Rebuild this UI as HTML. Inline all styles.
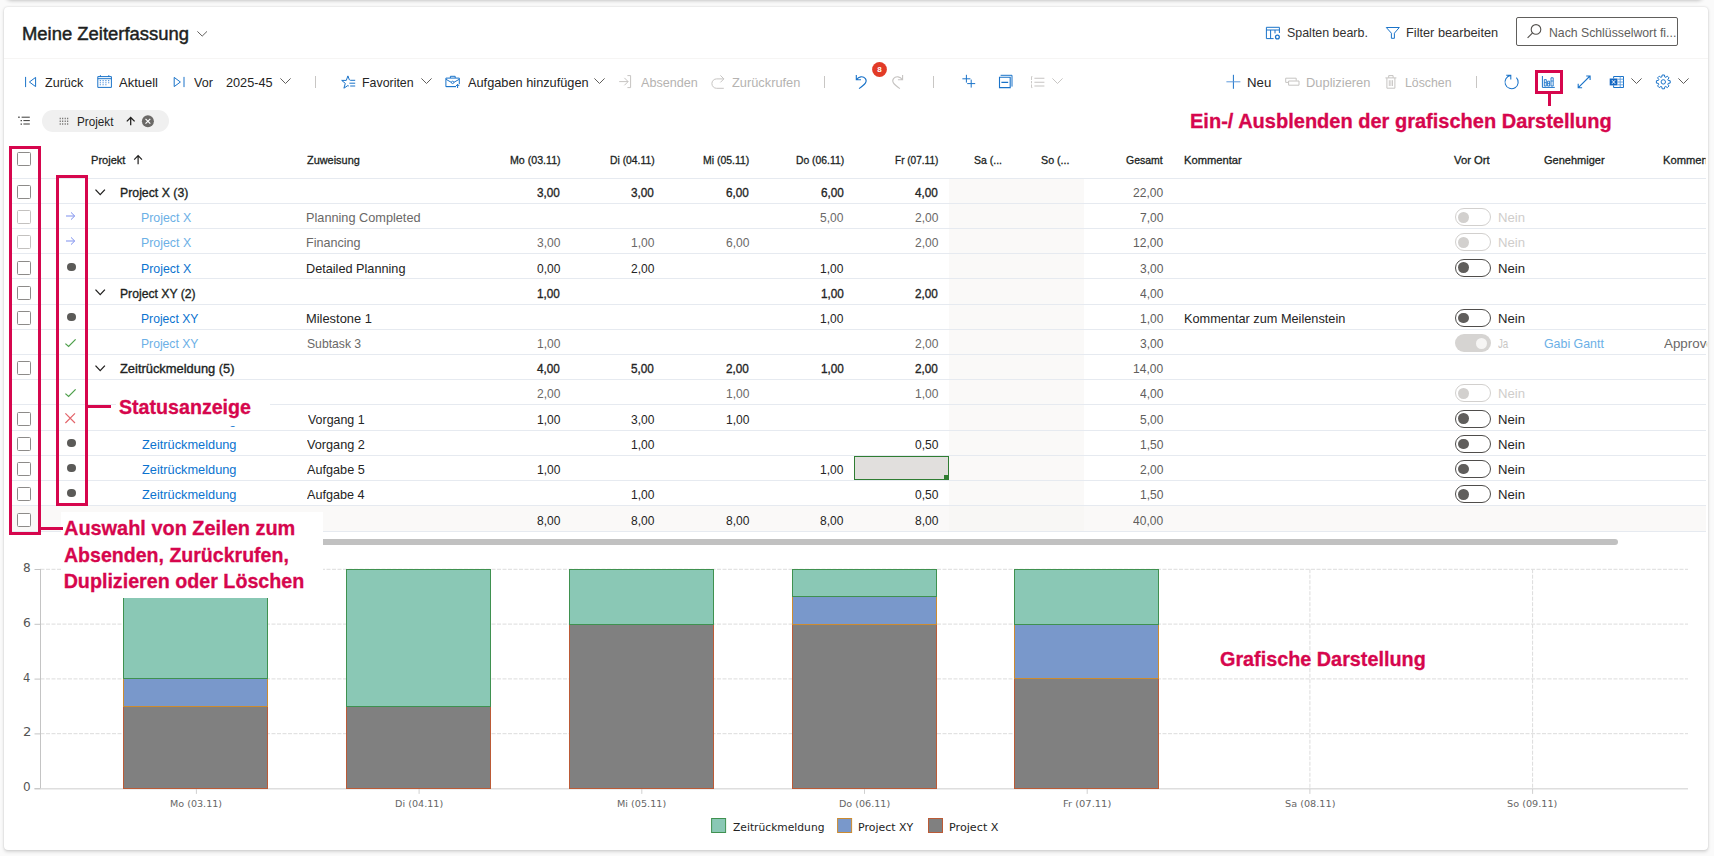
<!DOCTYPE html>
<html lang="de"><head><meta charset="utf-8"><title>Meine Zeiterfassung</title>
<style>
html,body{margin:0;padding:0}
body{width:1714px;height:856px;overflow:hidden;background:#fafafa;font-family:"Liberation Sans",sans-serif}
#app{position:relative;width:1714px;height:856px;overflow:hidden;background:#fafafa}
#app div,#app svg,#app span{position:absolute;display:block}
#app span{white-space:nowrap;line-height:20px;height:20px;transform-origin:0 0}
svg{overflow:visible}

</style></head>
<body>
<div id="app">
<div style="left:7px;top:-12px;width:1695px;height:12px;background:#fff;border-radius:4px;box-shadow:0 0 4px rgba(0,0,0,.32)"></div><div style="left:4px;top:7px;width:1704px;height:843px;background:#fff;border-radius:4px;box-shadow:0 0 2px rgba(0,0,0,.12),0 1.5px 3.5px rgba(0,0,0,.14)"></div><div style="left:949px;top:178.2px;width:135px;height:353.58px;background:#faf9f8"></div><div style="left:9px;top:505.41px;width:1697px;height:26.37px;background:#faf9f8"></div><div style="left:949px;top:505.41px;width:135px;height:26.37px;background:#f8f7f5"></div><div style="left:4px;top:58px;width:1704px;height:1px;background:#f6f5f4"></div><div style="left:1516px;top:17px;width:162px;height:28.5px;box-sizing:border-box;border:1px solid #605e5c;border-radius:2px;background:#fff"></div><div style="left:314.5px;top:76.3px;width:1px;height:11.5px;background:#c8c6c4"></div><div style="left:824px;top:76.3px;width:1px;height:11.5px;background:#c8c6c4"></div><div style="left:932.5px;top:76.3px;width:1px;height:11.5px;background:#c8c6c4"></div><div style="left:1475.5px;top:76.3px;width:1px;height:11.5px;background:#c8c6c4"></div><div style="left:42px;top:110px;width:127px;height:22px;background:#f0f0f0;border-radius:11px"></div><div style="left:9px;top:178px;width:1697px;height:1px;background:#e6eaf0"></div><div style="left:9px;top:203px;width:1697px;height:1px;background:#e6eaf0"></div><div style="left:9px;top:228px;width:1697px;height:1px;background:#e6eaf0"></div><div style="left:9px;top:253px;width:1697px;height:1px;background:#e6eaf0"></div><div style="left:9px;top:278px;width:1697px;height:1px;background:#e6eaf0"></div><div style="left:9px;top:304px;width:1697px;height:1px;background:#e6eaf0"></div><div style="left:9px;top:329px;width:1697px;height:1px;background:#e6eaf0"></div><div style="left:9px;top:354px;width:1697px;height:1px;background:#e6eaf0"></div><div style="left:9px;top:379px;width:1697px;height:1px;background:#e6eaf0"></div><div style="left:9px;top:404px;width:1697px;height:1px;background:#e6eaf0"></div><div style="left:9px;top:430px;width:1697px;height:1px;background:#e6eaf0"></div><div style="left:9px;top:455px;width:1697px;height:1px;background:#e6eaf0"></div><div style="left:9px;top:480px;width:1697px;height:1px;background:#e6eaf0"></div><div style="left:9px;top:505px;width:1697px;height:1px;background:#e6eaf0"></div><div style="left:9px;top:531px;width:1697px;height:1px;background:#e6eaf0"></div><div style="left:300px;top:539px;width:1318px;height:6.2px;background:#c1c1c1;border-radius:3px"></div><svg style="left:0;top:0" width="1714" height="856" viewBox="0 0 1714 856"><path d="M40.5 733.7 H1688" stroke="#dcdcdc" stroke-width="1" stroke-dasharray="4 1.5" fill="none"/><path d="M40.5 678.9 H1688" stroke="#dcdcdc" stroke-width="1" stroke-dasharray="4 1.5" fill="none"/><path d="M40.5 624.1 H1688" stroke="#dcdcdc" stroke-width="1" stroke-dasharray="4 1.5" fill="none"/><path d="M40.5 569.3 H1688" stroke="#dcdcdc" stroke-width="1" stroke-dasharray="4 1.5" fill="none"/><path d="M196.4 569.2 V788.4" stroke="#dcdcdc" stroke-width="1" stroke-dasharray="4 1.5" fill="none"/><path d="M419.1 569.2 V788.4" stroke="#dcdcdc" stroke-width="1" stroke-dasharray="4 1.5" fill="none"/><path d="M641.8 569.2 V788.4" stroke="#dcdcdc" stroke-width="1" stroke-dasharray="4 1.5" fill="none"/><path d="M864.5 569.2 V788.4" stroke="#dcdcdc" stroke-width="1" stroke-dasharray="4 1.5" fill="none"/><path d="M1087.2 569.2 V788.4" stroke="#dcdcdc" stroke-width="1" stroke-dasharray="4 1.5" fill="none"/><path d="M1309.9 569.2 V788.4" stroke="#dcdcdc" stroke-width="1" stroke-dasharray="4 1.5" fill="none"/><path d="M1532.6 569.2 V788.4" stroke="#dcdcdc" stroke-width="1" stroke-dasharray="4 1.5" fill="none"/><path d="M40.5 568.9 V788.9" stroke="#c4c4c4" stroke-width="1" fill="none"/><path d="M34.5 788.6999999999999 H1688" stroke="#dedede" stroke-width="1.6" fill="none"/><path d="M34.5 788.7 H40.5" stroke="#c4c4c4" stroke-width="1" fill="none"/><path d="M34.5 733.9 H40.5" stroke="#c4c4c4" stroke-width="1" fill="none"/><path d="M34.5 679.1 H40.5" stroke="#c4c4c4" stroke-width="1" fill="none"/><path d="M34.5 624.3 H40.5" stroke="#c4c4c4" stroke-width="1" fill="none"/><path d="M34.5 569.5 H40.5" stroke="#c4c4c4" stroke-width="1" fill="none"/><path d="M196.4 788.9 V793.9" stroke="#d0d0d0" stroke-width="1" fill="none"/><path d="M419.1 788.9 V793.9" stroke="#d0d0d0" stroke-width="1" fill="none"/><path d="M641.8 788.9 V793.9" stroke="#d0d0d0" stroke-width="1" fill="none"/><path d="M864.5 788.9 V793.9" stroke="#d0d0d0" stroke-width="1" fill="none"/><path d="M1087.2 788.9 V793.9" stroke="#d0d0d0" stroke-width="1" fill="none"/><path d="M1309.9 788.9 V793.9" stroke="#d0d0d0" stroke-width="1" fill="none"/><path d="M1532.6 788.9 V793.9" stroke="#d0d0d0" stroke-width="1" fill="none"/><rect x="123.5" y="706.5" width="144" height="82.0" fill="#808080" stroke="#bb5a36" stroke-width="1"/><rect x="123.5" y="678.5" width="144" height="28.0" fill="#7998cb" stroke="#cc8b30" stroke-width="1"/><rect x="123.5" y="569.5" width="144" height="109.0" fill="#8ac8b5" stroke="#3f9150" stroke-width="1"/><rect x="346.5" y="706.5" width="144" height="82.0" fill="#808080" stroke="#bb5a36" stroke-width="1"/><rect x="346.5" y="569.5" width="144" height="137.0" fill="#8ac8b5" stroke="#3f9150" stroke-width="1"/><rect x="569.5" y="624.5" width="144" height="164.0" fill="#808080" stroke="#bb5a36" stroke-width="1"/><rect x="569.5" y="569.5" width="144" height="55.0" fill="#8ac8b5" stroke="#3f9150" stroke-width="1"/><rect x="792.5" y="624.5" width="144" height="164.0" fill="#808080" stroke="#bb5a36" stroke-width="1"/><rect x="792.5" y="596.5" width="144" height="28.0" fill="#7998cb" stroke="#cc8b30" stroke-width="1"/><rect x="792.5" y="569.5" width="144" height="27.0" fill="#8ac8b5" stroke="#3f9150" stroke-width="1"/><rect x="1014.5" y="678.5" width="144" height="110.0" fill="#808080" stroke="#bb5a36" stroke-width="1"/><rect x="1014.5" y="624.5" width="144" height="54.0" fill="#7998cb" stroke="#cc8b30" stroke-width="1"/><rect x="1014.5" y="569.5" width="144" height="55.0" fill="#8ac8b5" stroke="#3f9150" stroke-width="1"/><rect x="711.6" y="818.5" width="14" height="14" fill="#8ac8b5" stroke="#3f9150" stroke-width="1"/><rect x="837.6" y="818.5" width="14" height="14" fill="#7998cb" stroke="#cc8b30" stroke-width="1"/><rect x="928.5" y="818.5" width="14" height="14" fill="#808080" stroke="#bb5a36" stroke-width="1"/></svg><div style="left:17px;top:152px;width:14px;height:14px;box-sizing:border-box;border:1px solid #8d8b89;border-radius:1.5px;background:#fff"></div><div style="left:17px;top:185px;width:14px;height:14px;box-sizing:border-box;border:1px solid #8d8b89;border-radius:1.5px;background:#fff"></div><div style="left:17px;top:210px;width:14px;height:14px;box-sizing:border-box;border:1px solid #c3c1bf;border-radius:1.5px;background:#fff"></div><div style="left:1455px;top:208.27px;width:36px;height:18px;box-sizing:border-box;border:1px solid #d2d0ce;border-radius:9px;background:#fff"></div><div style="left:17px;top:235px;width:14px;height:14px;box-sizing:border-box;border:1px solid #c3c1bf;border-radius:1.5px;background:#fff"></div><div style="left:1455px;top:233.44px;width:36px;height:18px;box-sizing:border-box;border:1px solid #d2d0ce;border-radius:9px;background:#fff"></div><div style="left:17px;top:261px;width:14px;height:14px;box-sizing:border-box;border:1px solid #8d8b89;border-radius:1.5px;background:#fff"></div><div style="left:67.45px;top:262.86px;width:8.1px;height:8.1px;border-radius:50%;background:#5b5a58"></div><div style="left:1455px;top:258.61px;width:36px;height:18px;box-sizing:border-box;border:1px solid #4f4d4b;border-radius:9px;background:#fff"></div><div style="left:17px;top:286px;width:14px;height:14px;box-sizing:border-box;border:1px solid #8d8b89;border-radius:1.5px;background:#fff"></div><div style="left:17px;top:311px;width:14px;height:14px;box-sizing:border-box;border:1px solid #8d8b89;border-radius:1.5px;background:#fff"></div><div style="left:67.45px;top:313.2px;width:8.1px;height:8.1px;border-radius:50%;background:#5b5a58"></div><div style="left:1455px;top:308.95px;width:36px;height:18px;box-sizing:border-box;border:1px solid #4f4d4b;border-radius:9px;background:#fff"></div><div style="left:1455px;top:334.12px;width:36px;height:18px;border-radius:9px;background:#d6d4d2"></div><div style="left:17px;top:361px;width:14px;height:14px;box-sizing:border-box;border:1px solid #8d8b89;border-radius:1.5px;background:#fff"></div><div style="left:1455px;top:384.46px;width:36px;height:18px;box-sizing:border-box;border:1px solid #d2d0ce;border-radius:9px;background:#fff"></div><div style="left:17px;top:412px;width:14px;height:14px;box-sizing:border-box;border:1px solid #8d8b89;border-radius:1.5px;background:#fff"></div><div style="left:1455px;top:409.63px;width:36px;height:18px;box-sizing:border-box;border:1px solid #4f4d4b;border-radius:9px;background:#fff"></div><div style="left:17px;top:437px;width:14px;height:14px;box-sizing:border-box;border:1px solid #8d8b89;border-radius:1.5px;background:#fff"></div><div style="left:67.45px;top:439.05px;width:8.1px;height:8.1px;border-radius:50%;background:#5b5a58"></div><div style="left:1455px;top:434.8px;width:36px;height:18px;box-sizing:border-box;border:1px solid #4f4d4b;border-radius:9px;background:#fff"></div><div style="left:17px;top:462px;width:14px;height:14px;box-sizing:border-box;border:1px solid #8d8b89;border-radius:1.5px;background:#fff"></div><div style="left:67.45px;top:464.22px;width:8.1px;height:8.1px;border-radius:50%;background:#5b5a58"></div><div style="left:1455px;top:459.97px;width:36px;height:18px;box-sizing:border-box;border:1px solid #4f4d4b;border-radius:9px;background:#fff"></div><div style="left:17px;top:487px;width:14px;height:14px;box-sizing:border-box;border:1px solid #8d8b89;border-radius:1.5px;background:#fff"></div><div style="left:67.45px;top:489.39px;width:8.1px;height:8.1px;border-radius:50%;background:#5b5a58"></div><div style="left:1455px;top:485.14px;width:36px;height:18px;box-sizing:border-box;border:1px solid #4f4d4b;border-radius:9px;background:#fff"></div><div style="left:17px;top:513px;width:14px;height:14px;box-sizing:border-box;border:1px solid #8d8b89;border-radius:1.5px;background:#fff"></div><div style="left:1458.3px;top:211.97px;width:10.8px;height:10.8px;border-radius:50%;background:#d2d0ce"></div><div style="left:1458.3px;top:237.14px;width:10.8px;height:10.8px;border-radius:50%;background:#d2d0ce"></div><div style="left:1458.3px;top:262.31px;width:10.8px;height:10.8px;border-radius:50%;background:#605e5c"></div><div style="left:1458.3px;top:312.65px;width:10.8px;height:10.8px;border-radius:50%;background:#605e5c"></div><div style="left:1475.8px;top:337.62px;width:11px;height:11px;border-radius:50%;background:#f6f5f4"></div><div style="left:1458.3px;top:388.16px;width:10.8px;height:10.8px;border-radius:50%;background:#d2d0ce"></div><div style="left:1458.3px;top:413.33px;width:10.8px;height:10.8px;border-radius:50%;background:#605e5c"></div><div style="left:1458.3px;top:438.5px;width:10.8px;height:10.8px;border-radius:50%;background:#605e5c"></div><div style="left:1458.3px;top:463.67px;width:10.8px;height:10.8px;border-radius:50%;background:#605e5c"></div><div style="left:1458.3px;top:488.84px;width:10.8px;height:10.8px;border-radius:50%;background:#605e5c"></div><div style="left:854px;top:456px;width:95.2px;height:24.2px;box-sizing:border-box;border:1px solid #2f7d32;background:#e1dfdd"></div><div style="left:943.6px;top:474.8px;width:5.5px;height:5.3px;background:#2f7d32"></div><svg style="left:196.8px;top:31.4px" width="10.4" height="5.6" viewBox="0 0 10.4 5.6" ><path d="M.4 .4 L5.2 5.1 L10 .4" fill="none" stroke="#605e5c" stroke-width="1.0"/></svg><svg style="left:279.5px;top:78.4px" width="11" height="6" viewBox="0 0 11 6" ><path d="M.4 .4 L5.5 5.5 L10.6 .4" fill="none" stroke="#605e5c" stroke-width="1.0"/></svg><svg style="left:420.6px;top:78.4px" width="11" height="6" viewBox="0 0 11 6" ><path d="M.4 .4 L5.5 5.5 L10.6 .4" fill="none" stroke="#605e5c" stroke-width="1.0"/></svg><svg style="left:594.4px;top:78.4px" width="11" height="6" viewBox="0 0 11 6" ><path d="M.4 .4 L5.5 5.5 L10.6 .4" fill="none" stroke="#605e5c" stroke-width="1.0"/></svg><svg style="left:1051.8px;top:78.4px" width="11" height="6" viewBox="0 0 11 6" ><path d="M.4 .4 L5.5 5.5 L10.6 .4" fill="none" stroke="#c8c6c4" stroke-width="1.0"/></svg><svg style="left:1631px;top:78.4px" width="11" height="6" viewBox="0 0 11 6" ><path d="M.4 .4 L5.5 5.5 L10.6 .4" fill="none" stroke="#605e5c" stroke-width="1.0"/></svg><svg style="left:1677.8px;top:78.4px" width="11" height="6" viewBox="0 0 11 6" ><path d="M.4 .4 L5.5 5.5 L10.6 .4" fill="none" stroke="#605e5c" stroke-width="1.0"/></svg><svg style="left:0;top:0" width="1714" height="856" viewBox="0 0 1714 856"><path d="M25.6 76.9 V87.1" fill="none" stroke="#1a73c9" stroke-width="1.0" /><path d="M35.6 77.4 L29.4 82 L35.6 86.6 Z" fill="none" stroke="#1a73c9" stroke-width="1.0" stroke-linejoin="miter"/><path d="M97.8 76.6 H111.4 V87.4 H97.8 Z M97.8 78.7 H111.4" fill="none" stroke="#1a73c9" stroke-width="1.0" /><path d="M100.4 75.2 V77 M108.8 75.2 V77" fill="none" stroke="#1a73c9" stroke-width="1.0" /><path d="M99.75 80.05 h1.1 v1.1 h-1.1 z" fill="#3b86d8"/><path d="M102.55 80.05 h1.1 v1.1 h-1.1 z" fill="#3b86d8"/><path d="M105.35000000000001 80.05 h1.1 v1.1 h-1.1 z" fill="#3b86d8"/><path d="M108.15 80.05 h1.1 v1.1 h-1.1 z" fill="#3b86d8"/><path d="M99.75 82.15 h1.1 v1.1 h-1.1 z" fill="#3b86d8"/><path d="M102.55 82.15 h1.1 v1.1 h-1.1 z" fill="#3b86d8"/><path d="M105.35000000000001 82.15 h1.1 v1.1 h-1.1 z" fill="#3b86d8"/><path d="M108.15 82.15 h1.1 v1.1 h-1.1 z" fill="#3b86d8"/><path d="M99.75 84.25 h1.1 v1.1 h-1.1 z" fill="#3b86d8"/><path d="M102.55 84.25 h1.1 v1.1 h-1.1 z" fill="#3b86d8"/><path d="M105.35000000000001 84.25 h1.1 v1.1 h-1.1 z" fill="#3b86d8"/><path d="M174.2 77.4 L180.4 82 L174.2 86.6 Z" fill="none" stroke="#1a73c9" stroke-width="1.0" /><path d="M184 76.9 V87.1" fill="none" stroke="#1a73c9" stroke-width="1.0" /><path d="M349.5 80.2 L347.9 75.9 L346.3 80.4 H341.7 L345.3 83.4 L343.9 88.2 L347.9 85.5 L348.8 86.1" fill="none" stroke="#1a73c9" stroke-width="1.0" stroke-linejoin="miter"/><path d="M350.2 80.3 H355.2 M349.4 83.2 H355.2 M350.2 86 H355.2" fill="none" stroke="#1a73c9" stroke-width="1.0" /><path d="M445.9 78.1 H459.3 V84.2 M456 86.6 H445.9 Z M445.9 78.1 V86.6" fill="none" stroke="#1a73c9" stroke-width="1.0" /><path d="M450.4 78 V76.3 H455.2 V78" fill="none" stroke="#1a73c9" stroke-width="1.0" /><path d="M446 79.3 L451.4 82.4 M453.8 82.4 L459.2 79.3" fill="none" stroke="#1a73c9" stroke-width="1.0" /><path d="M451.4 82.4 a1.2 1.2 0 1 0 2.4 0 a1.2 1.2 0 1 0 -2.4 0" fill="none" stroke="#1a73c9" stroke-width="0.9" /><path d="M457.6 88 V84.4 M456 86 L457.6 84.3 L459.2 86" fill="none" stroke="#1a73c9" stroke-width="1.0" /><path d="M619.2 81.6 H628 M624.4 77.9 L628.1 81.6 L624.4 85.3" fill="none" stroke="#c6c4c2" stroke-width="1.0" /><path d="M627.4 75.6 H630.6 V87.6 H627.4" fill="none" stroke="#c6c4c2" stroke-width="1.0" /><path d="M723.8 88.3 H716.6 A4.7 4.7 0 0 1 716.6 78.9 H723.4 M720.4 75.4 L723.9 78.9 L720.4 82.4" fill="none" stroke="#c6c4c2" stroke-width="1.0" /><path d="M856.3 75 V79.8 H861 M856.6 79.6 C858.5 76.6 863 75.6 865.4 78.6 C867.6 81.6 865.2 84.4 859 88.6" fill="none" stroke="#1a73c9" stroke-width="1.1" /><path d="M902.6 75 V79.8 H897.9 M902.3 79.6 C900.4 76.6 895.9 75.6 893.5 78.6 C891.3 81.6 893.7 84.4 899.9 88.6" fill="none" stroke="#c6c4c2" stroke-width="1.1" /><circle cx="879.5" cy="69.5" r="7.4" fill="#e23b27"/><path d="M966.4 74.8 V82.6 M962.4 78.8 H970.4 M971.2 79.6 V87.6 M967.2 83.6 H975.2" fill="none" stroke="#1a73c9" stroke-width="1.0" /><path d="M999.5 77.3 H1010.2 V87.6 H999.5 Z M1001.4 82.4 H1008.2" fill="none" stroke="#1a73c9" stroke-width="1.1" /><path d="M1000.6 75.3 H1012 V86.6" fill="none" stroke="#1a73c9" stroke-width="1.0" /><path d="M1034.4 78.2 H1044.4 M1034.4 82.2 H1044.4 M1034.4 86 H1044.4" fill="none" stroke="#c6c4c2" stroke-width="1.1" /><path d="M1032.4 76.6 H1031.5 V80 M1031.5 81 V83.4 M1031.5 84.4 V87.6 H1032.4" fill="none" stroke="#c6c4c2" stroke-width="0.9" /><path d="M1233.4 74.8 V88.8" fill="none" stroke="#1a73c9" stroke-width="1.0" /><path d="M1226.4 81.8 H1240.4" fill="none" stroke="#5f9bdc" stroke-width="1.0" /><path d="M1288.2 82.4 H1285.7 V78.2 H1296.2 V80.6" fill="none" stroke="#c6c4c2" stroke-width="1.0" /><path d="M1288.6 81 H1299 V85.2 H1288.6 Z" fill="none" stroke="#c6c4c2" stroke-width="1.0" /><path d="M1385.4 77.9 H1396.4 M1388.7 77.8 V75.6 H1393.1 V77.8 M1386.9 78 V88.2 H1394.9 V78" fill="none" stroke="#c6c4c2" stroke-width="1.0" /><path d="M1389.3 80.2 V86 M1390.9 80.2 V86 M1392.5 80.2 V86" fill="none" stroke="#c6c4c2" stroke-width="0.9" /><path d="M1510.6 75.6 A6.6 6.6 0 1 0 1516.4 77.6 M1506.2 75.2 H1510.8 V79.6" fill="none" stroke="#1a73c9" stroke-width="1.05" /><path d="M1542.4 76 V87.4 H1554.8" fill="none" stroke="#1a73c9" stroke-width="1.0" /><path d="M1544.3 79.6 H1546.3 V86 H1544.3 Z M1547.6 81.2 H1549.6 V86 H1547.6 Z M1551 77.8 H1553.2 V86 H1551 Z" fill="none" stroke="#1a73c9" stroke-width="0.9" /><path d="M1544.3 82.6 H1546.3 M1547.6 83.4 H1549.6 M1551 81 H1553.2" fill="none" stroke="#1a73c9" stroke-width="0.8" /><path d="M1578.3 87.6 L1590 76 M1586.2 76 H1590.1 V79.9 M1578.2 83.8 V87.7 H1582.1" fill="none" stroke="#1a73c9" stroke-width="1.1" /><path d="M1613.6 78.4 V76.5 H1623.5 V87.5 H1613.6 V85.4" fill="none" stroke="#1a73c9" stroke-width="1.0" /><path d="M1617.6 79.2 H1623.4 M1617.6 82 H1623.4 M1617.6 84.8 H1623.4 M1620.2 76.6 V87.4" fill="none" stroke="#5b9bdd" stroke-width="0.9" /><path d="M1609.7 78.5 H1617.4 V85.4 H1609.7 Z" fill="#1467c2"/><path d="M1612 80.2 L1615.2 83.8 M1615.2 80.2 L1612 83.8" fill="none" stroke="#fff" stroke-width="1.0" /><path d="M1668.17 80.39 L1670.20 80.72 L1670.20 83.08 L1668.17 83.41 L1667.81 84.28 L1669.02 85.94 L1667.34 87.62 L1665.68 86.41 L1664.81 86.77 L1664.48 88.80 L1662.12 88.80 L1661.79 86.77 L1660.92 86.41 L1659.26 87.62 L1657.58 85.94 L1658.79 84.28 L1658.43 83.41 L1656.40 83.08 L1656.40 80.72 L1658.43 80.39 L1658.79 79.52 L1657.58 77.86 L1659.26 76.18 L1660.92 77.39 L1661.79 77.03 L1662.12 75.00 L1664.48 75.00 L1664.81 77.03 L1665.68 77.39 L1667.34 76.18 L1669.02 77.86 L1667.81 79.52 Z" fill="none" stroke="#1a73c9" stroke-width="1.0" stroke-linejoin="round"/><circle cx="1663.3" cy="81.9" r="2.2" fill="none" stroke="#1a73c9" stroke-width="1"/><path d="M1266.4 27.3 H1279.4 V33 M1273.6 38.6 H1266.4 V27.3 M1266.4 30 H1279.4 M1270.6 30 V38.6 M1275 30 V33.4" fill="none" stroke="#1a73c9" stroke-width="1.0" /><circle cx="1277.4" cy="37" r="1.9" fill="none" stroke="#1a73c9" stroke-width="1.3"/><path d="M1386.3 27.5 H1399.3 L1394.4 33.2 V38.3 H1391.4 V33.2 Z" fill="none" stroke="#1a73c9" stroke-width="1.0" stroke-linejoin="round"/><circle cx="1536" cy="29.4" r="4.8" fill="none" stroke="#55524f" stroke-width="1.1"/><path d="M1532.6 32.9 L1527.6 37.9" fill="none" stroke="#55524f" stroke-width="1.1" /><path d="M21.6 117.2 H29.8 M23.4 120.6 H29.8 M23.4 124 H29.8" fill="none" stroke="#3b3a39" stroke-width="1.0" /><path d="M18.3 116.6 h1.3 v1.3 h-1.3 z M20.6 120 h1.3 v1.3 h-1.3 z M20.6 123.4 h1.3 v1.3 h-1.3 z" fill="#3b3a39"/><path d="M59.7 117.65 h1 v1.5 h-1 z" fill="#605e5c"/><path d="M59.7 120.45 h1 v1.5 h-1 z" fill="#605e5c"/><path d="M59.7 123.25 h1 v1.5 h-1 z" fill="#605e5c"/><path d="M62.2 117.65 h1 v1.5 h-1 z" fill="#605e5c"/><path d="M62.2 120.45 h1 v1.5 h-1 z" fill="#605e5c"/><path d="M62.2 123.25 h1 v1.5 h-1 z" fill="#605e5c"/><path d="M64.7 117.65 h1 v1.5 h-1 z" fill="#605e5c"/><path d="M64.7 120.45 h1 v1.5 h-1 z" fill="#605e5c"/><path d="M64.7 123.25 h1 v1.5 h-1 z" fill="#605e5c"/><path d="M67.2 117.65 h1 v1.5 h-1 z" fill="#605e5c"/><path d="M67.2 120.45 h1 v1.5 h-1 z" fill="#605e5c"/><path d="M67.2 123.25 h1 v1.5 h-1 z" fill="#605e5c"/><path d="M130.7 125.2 V117.6 M126.8 121.4 L130.7 117.5 L134.6 121.4" fill="none" stroke="#201f1e" stroke-width="1.25" /><circle cx="147.9" cy="121.2" r="6" fill="#6b6967"/><path d="M145.5 118.8 L150.3 123.6 M150.3 118.8 L145.5 123.6" fill="none" stroke="#fff" stroke-width="1.2" /><path d="M138.1 164.2 V155.8 M134.2 159.6 L138.1 155.7 L142 159.6" fill="none" stroke="#201f1e" stroke-width="1.2" /></svg><svg style="left:95px;top:188.7px" width="10.4" height="6.6" viewBox="0 0 10.4 6.6" ><path d="M.5 .6 L5.2 5.6 L9.9 .6" fill="none" stroke="#201f1e" stroke-width="1.3"/></svg><svg style="left:65.9px;top:212.17px" width="9.2" height="8" viewBox="0 0 9.2 8" ><path d="M0 4 H8.6 M5 .4 L8.7 4 L5 7.6" fill="none" stroke="#7d90ee" stroke-width="1"/></svg><svg style="left:65.9px;top:237.34px" width="9.2" height="8" viewBox="0 0 9.2 8" ><path d="M0 4 H8.6 M5 .4 L8.7 4 L5 7.6" fill="none" stroke="#7d90ee" stroke-width="1"/></svg><svg style="left:95px;top:289.38px" width="10.4" height="6.6" viewBox="0 0 10.4 6.6" ><path d="M.5 .6 L5.2 5.6 L9.9 .6" fill="none" stroke="#201f1e" stroke-width="1.3"/></svg><svg style="left:65.2px;top:338.82px" width="11" height="8" viewBox="0 0 11 8" ><path d="M.4 4.6 L3.6 7.5 L10.6 .4" fill="none" stroke="#4fa04c" stroke-width="1.25"/></svg><svg style="left:95px;top:364.89px" width="10.4" height="6.6" viewBox="0 0 10.4 6.6" ><path d="M.5 .6 L5.2 5.6 L9.9 .6" fill="none" stroke="#201f1e" stroke-width="1.3"/></svg><svg style="left:65.2px;top:389.16px" width="11" height="8" viewBox="0 0 11 8" ><path d="M.4 4.6 L3.6 7.5 L10.6 .4" fill="none" stroke="#4fa04c" stroke-width="1.25"/></svg><svg style="left:65.2px;top:413.33px" width="10.4" height="10.4" viewBox="0 0 10.4 10.4" ><path d="M.4 .4 L10 10 M10 .4 L.4 10" fill="none" stroke="#e3656b" stroke-width="1.2"/></svg>
<span style="left:22.30px;top:24px;font-size:18px;color:#201f1e;-webkit-text-stroke:0.45px #201f1e;transform:scaleX(1.0238);">Meine Zeiterfassung</span>
<span style="left:1287.42px;top:23px;font-size:13px;color:#323130;transform:scaleX(0.9564);">Spalten bearb.</span>
<span style="left:1406.42px;top:23px;font-size:13px;color:#323130;transform:scaleX(0.9814);">Filter bearbeiten</span>
<span style="left:1549.36px;top:23px;font-size:13px;color:#605e5c;transform:scaleX(0.9421);">Nach Schlüsselwort fi...</span>
<span style="left:44.73px;top:73px;font-size:13.5px;color:#242424;transform:scaleX(0.9289);">Zurück</span>
<span style="left:119.10px;top:73px;font-size:13.5px;color:#242424;transform:scaleX(0.9619);">Aktuell</span>
<span style="left:193.60px;top:73px;font-size:13.5px;color:#242424;transform:scaleX(0.9302);">Vor</span>
<span style="left:225.94px;top:73px;font-size:13.5px;color:#242424;transform:scaleX(0.9400);">2025-45</span>
<span style="left:361.89px;top:73px;font-size:13.5px;color:#242424;transform:scaleX(0.9172);">Favoriten</span>
<span style="left:467.50px;top:73px;font-size:13.5px;color:#242424;transform:scaleX(0.9454);">Aufgaben hinzufügen</span>
<span style="left:640.90px;top:73px;font-size:13.5px;color:#b5b3b1;transform:scaleX(0.9348);">Absenden</span>
<span style="left:732.42px;top:73px;font-size:13.5px;color:#b5b3b1;transform:scaleX(0.9491);">Zurückrufen</span>
<span style="left:1247.32px;top:73px;font-size:13.5px;color:#242424;transform:scaleX(0.9782);">Neu</span>
<span style="left:1306.35px;top:73px;font-size:13.5px;color:#b5b3b1;transform:scaleX(0.9541);">Duplizieren</span>
<span style="left:1405.30px;top:73px;font-size:13.5px;color:#b5b3b1;transform:scaleX(0.9123);">Löschen</span>
<span style="left:877.30px;top:60px;font-size:8px;color:#fff;font-weight:700;">8</span>
<span style="left:76.62px;top:112px;font-size:12px;color:#242424;transform:scaleX(0.9750);">Projekt</span>
<span style="left:90.85px;top:150px;font-size:11px;color:#201f1e;-webkit-text-stroke:0.3px #201f1e;transform:scaleX(1.0055);">Projekt</span>
<span style="left:307.15px;top:150px;font-size:11px;color:#201f1e;-webkit-text-stroke:0.3px #201f1e;transform:scaleX(0.9922);">Zuweisung</span>
<span style="left:1184.24px;top:150px;font-size:11px;color:#201f1e;-webkit-text-stroke:0.3px #201f1e;transform:scaleX(1.0159);">Kommentar</span>
<span style="left:1454.45px;top:150px;font-size:11px;color:#201f1e;-webkit-text-stroke:0.3px #201f1e;transform:scaleX(1.0256);">Vor Ort</span>
<span style="left:1543.95px;top:150px;font-size:11px;color:#201f1e;-webkit-text-stroke:0.3px #201f1e;transform:scaleX(1.0014);">Genehmiger</span>
<span style="left:1662.74px;top:150px;font-size:11px;color:#201f1e;-webkit-text-stroke:0.3px #201f1e;transform:scaleX(1.0159);width:42.3px;overflow:hidden;">Kommentar</span>
<span style="left:509.57px;top:150px;font-size:11px;color:#201f1e;-webkit-text-stroke:0.3px #201f1e;transform:scaleX(0.9666);">Mo (03.11)</span>
<span style="left:609.90px;top:150px;font-size:11px;color:#201f1e;-webkit-text-stroke:0.3px #201f1e;transform:scaleX(0.9393);">Di (04.11)</span>
<span style="left:702.79px;top:150px;font-size:11px;color:#201f1e;-webkit-text-stroke:0.3px #201f1e;transform:scaleX(0.9514);">Mi (05.11)</span>
<span style="left:795.60px;top:150px;font-size:11px;color:#201f1e;-webkit-text-stroke:0.3px #201f1e;transform:scaleX(0.9398);">Do (06.11)</span>
<span style="left:894.91px;top:150px;font-size:11px;color:#201f1e;-webkit-text-stroke:0.3px #201f1e;transform:scaleX(0.9132);">Fr (07.11)</span>
<span style="left:973.77px;top:150px;font-size:11px;color:#201f1e;-webkit-text-stroke:0.3px #201f1e;transform:scaleX(0.9539);">Sa (...</span>
<span style="left:1041.26px;top:150px;font-size:11px;color:#201f1e;-webkit-text-stroke:0.3px #201f1e;transform:scaleX(0.9716);">So (...</span>
<span style="left:1126.07px;top:150px;font-size:11px;color:#201f1e;-webkit-text-stroke:0.3px #201f1e;transform:scaleX(0.9502);">Gesamt</span>
<span style="left:119.92px;top:183px;font-size:13px;color:#201f1e;-webkit-text-stroke:0.35px #201f1e;transform:scaleX(0.9456);">Project X (3)</span>
<span style="left:537.00px;top:183px;font-size:13px;color:#242424;-webkit-text-stroke:0.35px #242424;transform:scaleX(0.9050);">3,00</span>
<span style="left:631.30px;top:183px;font-size:13px;color:#242424;-webkit-text-stroke:0.35px #242424;transform:scaleX(0.9050);">3,00</span>
<span style="left:725.90px;top:183px;font-size:13px;color:#242424;-webkit-text-stroke:0.35px #242424;transform:scaleX(0.9050);">6,00</span>
<span style="left:820.50px;top:183px;font-size:13px;color:#242424;-webkit-text-stroke:0.35px #242424;transform:scaleX(0.9050);">6,00</span>
<span style="left:915.10px;top:183px;font-size:13px;color:#242424;-webkit-text-stroke:0.35px #242424;transform:scaleX(0.9050);">4,00</span>
<span style="left:1133.06px;top:183px;font-size:13px;color:#605e5c;transform:scaleX(0.9260);">22,00</span>
<span style="left:140.95px;top:208px;font-size:13px;color:#6cb0e6;transform:scaleX(0.9513);">Project X</span>
<span style="left:306.32px;top:208px;font-size:13px;color:#6a6867;transform:scaleX(0.9782);">Planning Completed</span>
<span style="left:1497.59px;top:208px;font-size:13px;color:#cfcdcb;transform:scaleX(1.0115);">Nein</span>
<span style="left:820.13px;top:208px;font-size:13px;color:#6a6867;transform:scaleX(0.9260);">5,00</span>
<span style="left:914.73px;top:208px;font-size:13px;color:#6a6867;transform:scaleX(0.9260);">2,00</span>
<span style="left:1139.73px;top:208px;font-size:13px;color:#605e5c;transform:scaleX(0.9260);">7,00</span>
<span style="left:140.95px;top:233px;font-size:13px;color:#6cb0e6;transform:scaleX(0.9513);">Project X</span>
<span style="left:306.33px;top:233px;font-size:13px;color:#6a6867;transform:scaleX(0.9668);">Financing</span>
<span style="left:1497.59px;top:233px;font-size:13px;color:#cfcdcb;transform:scaleX(1.0115);">Nein</span>
<span style="left:536.63px;top:233px;font-size:13px;color:#6a6867;transform:scaleX(0.9260);">3,00</span>
<span style="left:630.93px;top:233px;font-size:13px;color:#6a6867;transform:scaleX(0.9260);">1,00</span>
<span style="left:725.53px;top:233px;font-size:13px;color:#6a6867;transform:scaleX(0.9260);">6,00</span>
<span style="left:914.73px;top:233px;font-size:13px;color:#6a6867;transform:scaleX(0.9260);">2,00</span>
<span style="left:1133.06px;top:233px;font-size:13px;color:#605e5c;transform:scaleX(0.9260);">12,00</span>
<span style="left:140.95px;top:259px;font-size:13px;color:#0b73cf;transform:scaleX(0.9513);">Project X</span>
<span style="left:306.32px;top:259px;font-size:13px;color:#242424;transform:scaleX(0.9760);">Detailed Planning</span>
<span style="left:1497.59px;top:259px;font-size:13px;color:#242424;transform:scaleX(1.0115);">Nein</span>
<span style="left:536.63px;top:259px;font-size:13px;color:#242424;transform:scaleX(0.9260);">0,00</span>
<span style="left:630.93px;top:259px;font-size:13px;color:#242424;transform:scaleX(0.9260);">2,00</span>
<span style="left:820.13px;top:259px;font-size:13px;color:#242424;transform:scaleX(0.9260);">1,00</span>
<span style="left:1139.73px;top:259px;font-size:13px;color:#605e5c;transform:scaleX(0.9260);">3,00</span>
<span style="left:119.93px;top:284px;font-size:13px;color:#201f1e;-webkit-text-stroke:0.35px #201f1e;transform:scaleX(0.9363);">Project XY (2)</span>
<span style="left:537.00px;top:284px;font-size:13px;color:#242424;-webkit-text-stroke:0.35px #242424;transform:scaleX(0.9050);">1,00</span>
<span style="left:820.50px;top:284px;font-size:13px;color:#242424;-webkit-text-stroke:0.35px #242424;transform:scaleX(0.9050);">1,00</span>
<span style="left:915.10px;top:284px;font-size:13px;color:#242424;-webkit-text-stroke:0.35px #242424;transform:scaleX(0.9050);">2,00</span>
<span style="left:1139.73px;top:284px;font-size:13px;color:#605e5c;transform:scaleX(0.9260);">4,00</span>
<span style="left:140.97px;top:309px;font-size:13px;color:#0b73cf;transform:scaleX(0.9333);">Project XY</span>
<span style="left:306.31px;top:309px;font-size:13px;color:#242424;transform:scaleX(0.9906);">Milestone 1</span>
<span style="left:1184.02px;top:309px;font-size:13px;color:#242424;transform:scaleX(0.9791);">Kommentar zum Meilenstein</span>
<span style="left:1497.59px;top:309px;font-size:13px;color:#242424;transform:scaleX(1.0115);">Nein</span>
<span style="left:820.13px;top:309px;font-size:13px;color:#242424;transform:scaleX(0.9260);">1,00</span>
<span style="left:1139.73px;top:309px;font-size:13px;color:#605e5c;transform:scaleX(0.9260);">1,00</span>
<span style="left:140.97px;top:334px;font-size:13px;color:#6cb0e6;transform:scaleX(0.9333);">Project XY</span>
<span style="left:306.83px;top:334px;font-size:13px;color:#6a6867;transform:scaleX(0.9364);">Subtask 3</span>
<span style="left:1497.85px;top:334px;font-size:13px;color:#c9c7c5;transform:scaleX(0.7497);">Ja</span>
<span style="left:1544.03px;top:334px;font-size:13px;color:#6cb0e6;transform:scaleX(0.9518);">Gabi Gantt</span>
<span style="left:1663.70px;top:334px;font-size:13px;color:#6a6867;transform:scaleX(1.0272);width:41.9px;overflow:hidden;">Approved</span>
<span style="left:536.63px;top:334px;font-size:13px;color:#6a6867;transform:scaleX(0.9260);">1,00</span>
<span style="left:914.73px;top:334px;font-size:13px;color:#6a6867;transform:scaleX(0.9260);">2,00</span>
<span style="left:1139.73px;top:334px;font-size:13px;color:#605e5c;transform:scaleX(0.9260);">3,00</span>
<span style="left:120.48px;top:359px;font-size:13px;color:#201f1e;-webkit-text-stroke:0.35px #201f1e;transform:scaleX(0.9908);">Zeitrückmeldung (5)</span>
<span style="left:537.00px;top:359px;font-size:13px;color:#242424;-webkit-text-stroke:0.35px #242424;transform:scaleX(0.9050);">4,00</span>
<span style="left:631.30px;top:359px;font-size:13px;color:#242424;-webkit-text-stroke:0.35px #242424;transform:scaleX(0.9050);">5,00</span>
<span style="left:725.90px;top:359px;font-size:13px;color:#242424;-webkit-text-stroke:0.35px #242424;transform:scaleX(0.9050);">2,00</span>
<span style="left:820.50px;top:359px;font-size:13px;color:#242424;-webkit-text-stroke:0.35px #242424;transform:scaleX(0.9050);">1,00</span>
<span style="left:915.10px;top:359px;font-size:13px;color:#242424;-webkit-text-stroke:0.35px #242424;transform:scaleX(0.9050);">2,00</span>
<span style="left:1133.06px;top:359px;font-size:13px;color:#605e5c;transform:scaleX(0.9260);">14,00</span>
<span style="left:1497.59px;top:384px;font-size:13px;color:#cfcdcb;transform:scaleX(1.0115);">Nein</span>
<span style="left:536.63px;top:384px;font-size:13px;color:#6a6867;transform:scaleX(0.9260);">2,00</span>
<span style="left:725.53px;top:384px;font-size:13px;color:#6a6867;transform:scaleX(0.9260);">1,00</span>
<span style="left:914.73px;top:384px;font-size:13px;color:#6a6867;transform:scaleX(0.9260);">1,00</span>
<span style="left:1139.73px;top:384px;font-size:13px;color:#605e5c;transform:scaleX(0.9260);">4,00</span>
<span style="left:141.51px;top:410px;font-size:13px;color:#0b73cf;transform:scaleX(0.9830);">Zeitrückmeldung</span>
<span style="left:307.50px;top:410px;font-size:13px;color:#242424;transform:scaleX(0.9555);">Vorgang 1</span>
<span style="left:1497.59px;top:410px;font-size:13px;color:#242424;transform:scaleX(1.0115);">Nein</span>
<span style="left:536.63px;top:410px;font-size:13px;color:#242424;transform:scaleX(0.9260);">1,00</span>
<span style="left:630.93px;top:410px;font-size:13px;color:#242424;transform:scaleX(0.9260);">3,00</span>
<span style="left:725.53px;top:410px;font-size:13px;color:#242424;transform:scaleX(0.9260);">1,00</span>
<span style="left:1139.73px;top:410px;font-size:13px;color:#605e5c;transform:scaleX(0.9260);">5,00</span>
<span style="left:141.51px;top:435px;font-size:13px;color:#0b73cf;transform:scaleX(0.9830);">Zeitrückmeldung</span>
<span style="left:307.30px;top:435px;font-size:13px;color:#242424;transform:scaleX(0.9760);">Vorgang 2</span>
<span style="left:1497.59px;top:435px;font-size:13px;color:#242424;transform:scaleX(1.0115);">Nein</span>
<span style="left:630.93px;top:435px;font-size:13px;color:#242424;transform:scaleX(0.9260);">1,00</span>
<span style="left:914.73px;top:435px;font-size:13px;color:#242424;transform:scaleX(0.9260);">0,50</span>
<span style="left:1139.73px;top:435px;font-size:13px;color:#605e5c;transform:scaleX(0.9260);">1,50</span>
<span style="left:141.51px;top:460px;font-size:13px;color:#0b73cf;transform:scaleX(0.9830);">Zeitrückmeldung</span>
<span style="left:307.30px;top:460px;font-size:13px;color:#242424;transform:scaleX(0.9743);">Aufgabe 5</span>
<span style="left:1497.59px;top:460px;font-size:13px;color:#242424;transform:scaleX(1.0115);">Nein</span>
<span style="left:536.63px;top:460px;font-size:13px;color:#242424;transform:scaleX(0.9260);">1,00</span>
<span style="left:820.13px;top:460px;font-size:13px;color:#242424;transform:scaleX(0.9260);">1,00</span>
<span style="left:1139.73px;top:460px;font-size:13px;color:#605e5c;transform:scaleX(0.9260);">2,00</span>
<span style="left:141.51px;top:485px;font-size:13px;color:#0b73cf;transform:scaleX(0.9830);">Zeitrückmeldung</span>
<span style="left:307.30px;top:485px;font-size:13px;color:#242424;transform:scaleX(0.9710);">Aufgabe 4</span>
<span style="left:1497.59px;top:485px;font-size:13px;color:#242424;transform:scaleX(1.0115);">Nein</span>
<span style="left:630.93px;top:485px;font-size:13px;color:#242424;transform:scaleX(0.9260);">1,00</span>
<span style="left:914.73px;top:485px;font-size:13px;color:#242424;transform:scaleX(0.9260);">0,50</span>
<span style="left:1139.73px;top:485px;font-size:13px;color:#605e5c;transform:scaleX(0.9260);">1,50</span>
<span style="left:536.63px;top:511px;font-size:13px;color:#242424;transform:scaleX(0.9260);">8,00</span>
<span style="left:630.93px;top:511px;font-size:13px;color:#242424;transform:scaleX(0.9260);">8,00</span>
<span style="left:725.53px;top:511px;font-size:13px;color:#242424;transform:scaleX(0.9260);">8,00</span>
<span style="left:820.13px;top:511px;font-size:13px;color:#242424;transform:scaleX(0.9260);">8,00</span>
<span style="left:914.73px;top:511px;font-size:13px;color:#242424;transform:scaleX(0.9260);">8,00</span>
<span style="left:1133.06px;top:511px;font-size:13px;color:#605e5c;transform:scaleX(0.9260);">40,00</span>
<span style="left:23.06px;top:777px;font-size:11.5px;color:#555;font-family:'DejaVu Sans',sans-serif;transform:scaleX(1.0493);">0</span>
<span style="left:22.88px;top:722px;font-size:11.5px;color:#555;font-family:'DejaVu Sans',sans-serif;transform:scaleX(1.1464);">2</span>
<span style="left:23.30px;top:668px;font-size:11.5px;color:#555;font-family:'DejaVu Sans',sans-serif;transform:scaleX(0.9985);">4</span>
<span style="left:22.94px;top:613px;font-size:11.5px;color:#555;font-family:'DejaVu Sans',sans-serif;transform:scaleX(1.0674);">6</span>
<span style="left:23.06px;top:558px;font-size:11.5px;color:#555;font-family:'DejaVu Sans',sans-serif;transform:scaleX(1.0493);">8</span>
<span style="left:170.24px;top:794px;font-size:9.5px;color:#666;font-family:'DejaVu Sans',sans-serif;transform:scaleX(1.0080);">Mo (03.11)</span>
<span style="left:394.84px;top:794px;font-size:9.5px;color:#666;font-family:'DejaVu Sans',sans-serif;transform:scaleX(1.0128);">Di (04.11)</span>
<span style="left:617.04px;top:794px;font-size:9.5px;color:#666;font-family:'DejaVu Sans',sans-serif;transform:scaleX(1.0149);">Mi (05.11)</span>
<span style="left:838.74px;top:794px;font-size:9.5px;color:#666;font-family:'DejaVu Sans',sans-serif;transform:scaleX(1.0080);">Do (06.11)</span>
<span style="left:1062.91px;top:794px;font-size:9.5px;color:#666;font-family:'DejaVu Sans',sans-serif;transform:scaleX(1.0425);">Fr (07.11)</span>
<span style="left:1284.69px;top:794px;font-size:9.5px;color:#666;font-family:'DejaVu Sans',sans-serif;transform:scaleX(1.0186);">Sa (08.11)</span>
<span style="left:1507.39px;top:794px;font-size:9.5px;color:#666;font-family:'DejaVu Sans',sans-serif;transform:scaleX(1.0184);">So (09.11)</span>
<span style="left:732.91px;top:818px;font-size:11px;color:#232323;font-family:'DejaVu Sans',sans-serif;transform:scaleX(0.9729);">Zeitrückmeldung</span>
<span style="left:858.30px;top:818px;font-size:11px;color:#232323;font-family:'DejaVu Sans',sans-serif;transform:scaleX(0.9981);">Project XY</span>
<span style="left:948.88px;top:818px;font-size:11px;color:#232323;font-family:'DejaVu Sans',sans-serif;transform:scaleX(1.0168);">Project X</span>
<div style="left:115.6px;top:384px;width:154.7px;height:41.5px;background:#fff"></div><div style="left:61.2px;top:512.4px;width:262px;height:86px;background:#fff"></div><div style="left:9px;top:146.3px;width:32px;height:388.7px;box-sizing:border-box;border:3px solid #d6064d"></div><div style="left:56px;top:175.2px;width:32px;height:330.8px;box-sizing:border-box;border:3px solid #d6064d"></div><div style="left:1535px;top:70px;width:28px;height:24px;box-sizing:border-box;border:3px solid #d6064d"></div><div style="left:1548px;top:94px;width:3.2px;height:12px;background:#d6064d"></div><div style="left:88px;top:405.3px;width:23.3px;height:3.2px;background:#d6064d"></div><div style="left:41px;top:526.8px;width:21.5px;height:3.2px;background:#d6064d"></div>
<span style="left:1189.83px;top:111px;font-size:19.7px;color:#d6064d;font-weight:700;-webkit-text-stroke:0.3px #d6064d;transform:scaleX(1.0164);">Ein-/ Ausblenden der grafischen Darstellung</span>
<span style="left:119.15px;top:397px;font-size:19.7px;color:#d6064d;font-weight:700;-webkit-text-stroke:0.3px #d6064d;transform:scaleX(0.9968);">Statusanzeige</span>
<span style="left:64.05px;top:518px;font-size:19.7px;color:#d6064d;font-weight:700;-webkit-text-stroke:0.3px #d6064d;transform:scaleX(1.0116);">Auswahl von Zeilen zum</span>
<span style="left:64.05px;top:545px;font-size:19.7px;color:#d6064d;font-weight:700;-webkit-text-stroke:0.3px #d6064d;transform:scaleX(0.9931);">Absenden, Zurückrufen,</span>
<span style="left:63.65px;top:571px;font-size:19.7px;color:#d6064d;font-weight:700;-webkit-text-stroke:0.3px #d6064d;">Duplizieren oder Löschen</span>
<span style="left:1219.85px;top:649px;font-size:19.7px;color:#d6064d;font-weight:700;-webkit-text-stroke:0.3px #d6064d;transform:scaleX(1.0055);">Grafische Darstellung</span>
</div>
</body></html>
